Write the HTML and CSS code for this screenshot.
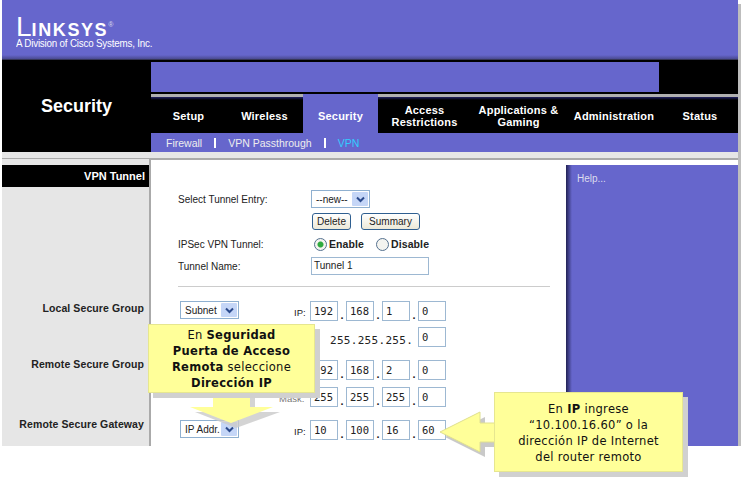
FILE: index.html
```html
<!DOCTYPE html>
<html>
	<head>
		<meta charset="UTF-8">
		<title>Security - VPN Tunnel</title>
		<link rel="stylesheet" href="styles.css">
	</head>
	<body>
		<div class="page">
			<!--logo-->
			<div class="header">
				<div class="logo"><span class="big">L</span>INKSYS<span class="reg">®</span></div>
				<div class="division">A Division of Cisco Systems, Inc.</div>
			</div>
			<!--title and tabs-->
			<div class="band">
				<div class="title">Security</div>
				<div class="navwrap">
					<div class="banner"></div>
					<ul class="tabs">
						<li class="t1">Setup</li>
						<li class="t2">Wireless</li>
						<li class="t3 active">Security</li>
						<li class="t4">Access<br>Restrictions</li>
						<li class="t5">Applications &amp;<br>Gaming</li>
						<li class="t6">Administration</li>
						<li class="t7">Status</li>
					</ul>
					<div class="subnav">
						<a>Firewall</a><i></i><a>VPN Passthrough</a><i></i><a class="on">VPN</a>
					</div>
				</div>
			</div>
			<div class="strip"></div>
			<div class="content">
				<div class="side">
					<div class="sidehead">VPN Tunnel</div>
					<div class="sidelabel local">Local Secure Group</div>
					<div class="sidelabel remote">Remote Secure Group</div>
					<div class="sidelabel gateway">Remote Secure Gateway</div>
				</div>
				<div class="main">
					<div class="row r-entry">
						<label>Select Tunnel Entry:</label>
						<div class="select w59"><span>--new--</span><b><svg width="9" height="7" viewBox="0 0 9 7"><path d="M1 1.5 L4.5 5 L8 1.5" fill="none" stroke="#2b4a8c" stroke-width="2"/></svg></b></div>
					</div>
					<div class="row r-btn">
						<label></label>
						<button class="btn b-del">Delete</button>
						<button class="btn b-sum">Summary</button>
					</div>
					<div class="row r-ipsec">
						<label>IPSec VPN Tunnel:</label>
						<span class="radio checked"></span><strong class="rlabel">Enable</strong>
						<span class="radio second"></span><strong class="rlabel">Disable</strong>
					</div>
					<div class="row r-name">
						<label>Tunnel Name:</label>
						<div class="field wide">Tunnel 1</div>
					</div>
					<div class="rule"></div>

					<div class="ips first">
						<div class="select w59 lead"><span>Subnet</span><b><svg width="9" height="7" viewBox="0 0 9 7"><path d="M1 1.5 L4.5 5 L8 1.5" fill="none" stroke="#2b4a8c" stroke-width="2"/></svg></b></div>
						<span class="iplabel">IP:</span>
						<div class="field oct">192</div><em>.</em><div class="field oct">168</div><em>.</em><div class="field oct">1</div><em>.</em><div class="field oct">0</div>
					</div>
					<div class="ips mask">
						<span class="masktext">255.255.255.</span><div class="field oct">0</div>
					</div>
					<div class="ips third">
						<div class="lead"></div>
						<span class="iplabel"></span>
						<div class="field oct">192</div><em>.</em><div class="field oct">168</div><em>.</em><div class="field oct">2</div><em>.</em><div class="field oct">0</div>
					</div>
					<div class="ips fourth">
						<div class="lead"></div>
						<span class="iplabel small">Mask:</span>
						<div class="field oct">255</div><em>.</em><div class="field oct">255</div><em>.</em><div class="field oct">255</div><em>.</em><div class="field oct">0</div>
					</div>
					<div class="ips fifth">
						<div class="select w59 lead"><span>IP Addr.</span><b><svg width="9" height="7" viewBox="0 0 9 7"><path d="M1 1.5 L4.5 5 L8 1.5" fill="none" stroke="#2b4a8c" stroke-width="2"/></svg></b></div>
						<span class="iplabel">IP:</span>
						<div class="field oct">10</div><em>.</em><div class="field oct">100</div><em>.</em><div class="field oct">16</div><em>.</em><div class="field oct">60</div>
					</div>
				</div>
				<div class="help">Help...</div>
			</div>
		</div>

		<!--callouts over the page-->
		<svg class="arrows" width="745" height="482" viewBox="0 0 745 482">
			<path d="M218 393 H255 V412 H280 L236 428 L195 412 H218 Z" fill="#c9c9c9" opacity=".8"/>
			<path d="M445 437 L485 417 V428 H499 V447 H485 V457 Z" fill="#c9c9c9"/>
			<path d="M213 392 H250 V407 H273 L231 423 L190 407 H213 Z" fill="#ffff99" />
			<path d="M440 432 L480 412 V423 H496 V442 H480 V452 Z" fill="#ffff99" stroke="#e0e090"/>
		</svg>
		<div class="note note1">En <b>Seguridad</b><br><b>Puerta de Acceso</b><br><b>Remota</b> seleccione<br><b>Dirección IP</b></div>
		<div class="note note2">En <b>IP</b> ingrese<br>“10.100.16.60” o la<br>dirección IP de Internet<br>del router remoto</div>
	</body>
</html>
```

FILE: styles.css
```css
*{
	margin:0;padding:0;
	box-sizing:border-box;
}
body{
	background:#fff;
	font-family:"Liberation Sans",Arial,sans-serif;
	font-size:10px;
	color:#222;
	overflow:hidden;
}
.page{
	width:736px;
	height:446px;
	margin-left:2px;
	box-shadow:3px 4px 0 #bdbdbd;
}
/*logo*/
.header{
	height:60px;
	padding:14px 0 0 14px;
	background:linear-gradient(#6666cc 55px,#4a4a90 59px,#222 60px);
	color:#fff;
}
.logo{
	height:21px;
	font-size:18px;
	line-height:21px;
	font-weight:bold;
	letter-spacing:1.6px;
	white-space:nowrap;
}
.logo .big{
	font-size:28px;
	font-weight:normal;
	letter-spacing:0;
	line-height:21px;
}
.logo .reg{
	font-size:7px;
	font-weight:normal;
	vertical-align:9px;
	letter-spacing:0;
	color:#dde;
}
.division{
	margin-top:3px;
	font-size:10px;
	letter-spacing:-.2px;
	white-space:nowrap;
	transform:scaleX(.98);
	transform-origin:left;
}
/*title and tabs*/
.band{
	display:flex;
	height:92px;
	background:#000;
}
.title{
	width:149px;
	padding-top:36px;
	text-align:center;
	font-size:18px;
	font-weight:bold;
	color:#fff;
}
.navwrap{
	flex:1;
}
.banner{
	width:508px;
	height:30px;
	margin-top:2px;
	background:#6666cc;
}
.tabs{
	display:flex;
	height:39px;
	margin-top:2px;
	list-style:none;
	background:linear-gradient(#b0b0b0 3px,#222266 3px,#000 6px);
}
.tabs li{
	display:flex;
	align-items:center;
	justify-content:center;
	padding-top:4px;
	text-align:center;
	font-size:11px;
	line-height:12px;
	font-weight:bold;
	letter-spacing:.2px;
	color:#fff;
}
.tabs .active{
	background:#6666cc;
}
.t1{width:75px;}
.t2{width:77px;}
.t3{width:75px;}
.t4{width:93px;}
.t5{width:95px;}
.t6{width:96px;}
.t7{width:76px;}
.subnav{
	display:flex;
	align-items:center;
	height:19px;
	padding-left:15px;
	background:#6666cc;
	font-size:10.5px;
	color:#eee;
}
.subnav i{
	width:2px;
	height:10px;
	margin:0 12px 0 12px;
	background:#fff;
}
.subnav .on{
	color:#33ccff;
}
.strip{
	height:8px;
	background:linear-gradient(#e6e6e6 6px,#aaa 6px);
}
/*body of the page*/
.content{
	display:flex;
	height:286px;
}
.side{
	width:147px;
	margin-top:-1px;
	background:#e6e6e6;
	border-right:0;
	padding-top:6px;
}
.sidehead{
	height:22px;
	padding-right:4px;
	line-height:22px;
	text-align:right;
	font-size:11px;
	font-weight:bold;
	color:#fff;
	background:#000;
}
.sidelabel{
	padding-right:5px;
	text-align:right;
	font-size:10.5px;
	line-height:12px;
	font-weight:bold;
	letter-spacing:.1px;
}
.local{margin-top:115px;}
.remote{margin-top:44px;}
.gateway{margin-top:48px;}
.main{
	width:417px;
	border-left:2px solid #aaa;
	background:#fff;
	padding-top:30px;
	font-size:10px;
}
.row{
	display:flex;
	align-items:center;
	padding-left:27px;
}
.row label{
	width:133px;
}
.r-entry{height:18px;}
.r-btn{height:17px;margin-top:5px;}
.r-ipsec{height:14px;margin-top:7px;}
.r-name{height:18px;margin-top:6px;}
.select{
	display:flex;
	align-items:center;
	justify-content:space-between;
	height:18px;
	padding:1px;
	border:1px solid #8fb0d0;
	background:#fff;
	font-size:10px;
}
.select span{
	padding-left:3px;
}
.select b{
	display:flex;
	align-items:center;
	justify-content:center;
	width:16px;
	height:14px;
	background:#c5d6f7;
	border-radius:1px;
}
.w59{width:59px;}
.btn{
	height:17px;
	border:1px solid #2f5f90;
	border-radius:3px;
	background:linear-gradient(#fff,#ece9d8);
	font-family:"Liberation Sans",Arial,sans-serif;
	font-size:10px;
	color:#222;
}
.b-del{width:39px;margin-left:1px;}
.b-sum{width:59px;margin-left:10px;}
.radio{
	width:13px;
	height:13px;
	margin-left:3px;
	border:1px solid #55718f;
	border-radius:50%;
	background:#f4f4f0;
}
.radio.checked{
	background:radial-gradient(#2faa3f 2.5px,#f4f4f0 3.5px);
}
.radio.second{
	margin-left:12px;
}
.rlabel{
	margin-left:2px;
	font-size:10.5px;
	letter-spacing:.1px;
}
.field{
	height:18px;
	border:1px solid #9db8d2;
	padding-left:2px;
	font-size:10px;
	line-height:16px;
	background:#fff;
}
.wide{width:118px;}
.rule{
	height:1px;
	margin:11px 16px 0 27px;
	background:#ccc;
}
.ips{
	display:flex;
	align-items:flex-start;
	height:20px;
	padding-left:29px;
}
.ips .oct{
	width:28px;
	height:20px;
	padding-left:3px;
	font-family:"DejaVu Sans Mono","Liberation Mono",monospace;
	font-size:10.5px;
	line-height:18px;
}
.ips em{
	width:8px;
	padding-top:8px;
	text-align:center;
	font-style:normal;
	font-weight:bold;
	font-size:11px;
}
.lead{
	width:59px;
	flex:none;
}
.iplabel{
	width:71px;
	padding:6px 0 0 55px;
	font-size:9.5px;
}
.iplabel.small{
	padding-left:40px;
	white-space:nowrap;
	color:#777;
}
.first{margin-top:14px;}
.mask{
	margin-top:6px;
	padding-left:179px;
}
.masktext{
	width:88px;
	padding-top:7px;
	font-family:"DejaVu Sans Mono","Liberation Mono",monospace;
	font-size:11px;
	letter-spacing:.3px;
}
.third{margin-top:13px;}
.fourth{margin-top:7px;}
.fifth{margin-top:13px;}
.first .select,.fifth .select{margin-top:0;}
.help{
	width:172px;
	margin-top:5px;
	padding:8px 0 0 11px;
	background:linear-gradient(90deg,#222255,#6666cc 6px);
	font-size:10px;
	color:#dde;
}
/*callouts*/
.arrows{
	position:absolute;
	left:0;
	top:0;
}
.note{
	position:absolute;
	background:#ffff99;
	border:1px solid #e6e690;
	text-align:center;
	font-family:"DejaVu Sans",Verdana,sans-serif;
	font-size:11.5px;
	line-height:16px;
	letter-spacing:.3px;
	color:#111;
}
.note1{
	left:148px;
	top:324px;
	width:167px;
	height:69px;
	padding-top:2px;
	box-shadow:5px 5px 0 #d0d0d0;
}
.note2{
	left:494px;
	top:392px;
	width:189px;
	height:80px;
	padding-top:8px;
	box-shadow:5px 5px 0 #d0d0d0;
}
```
